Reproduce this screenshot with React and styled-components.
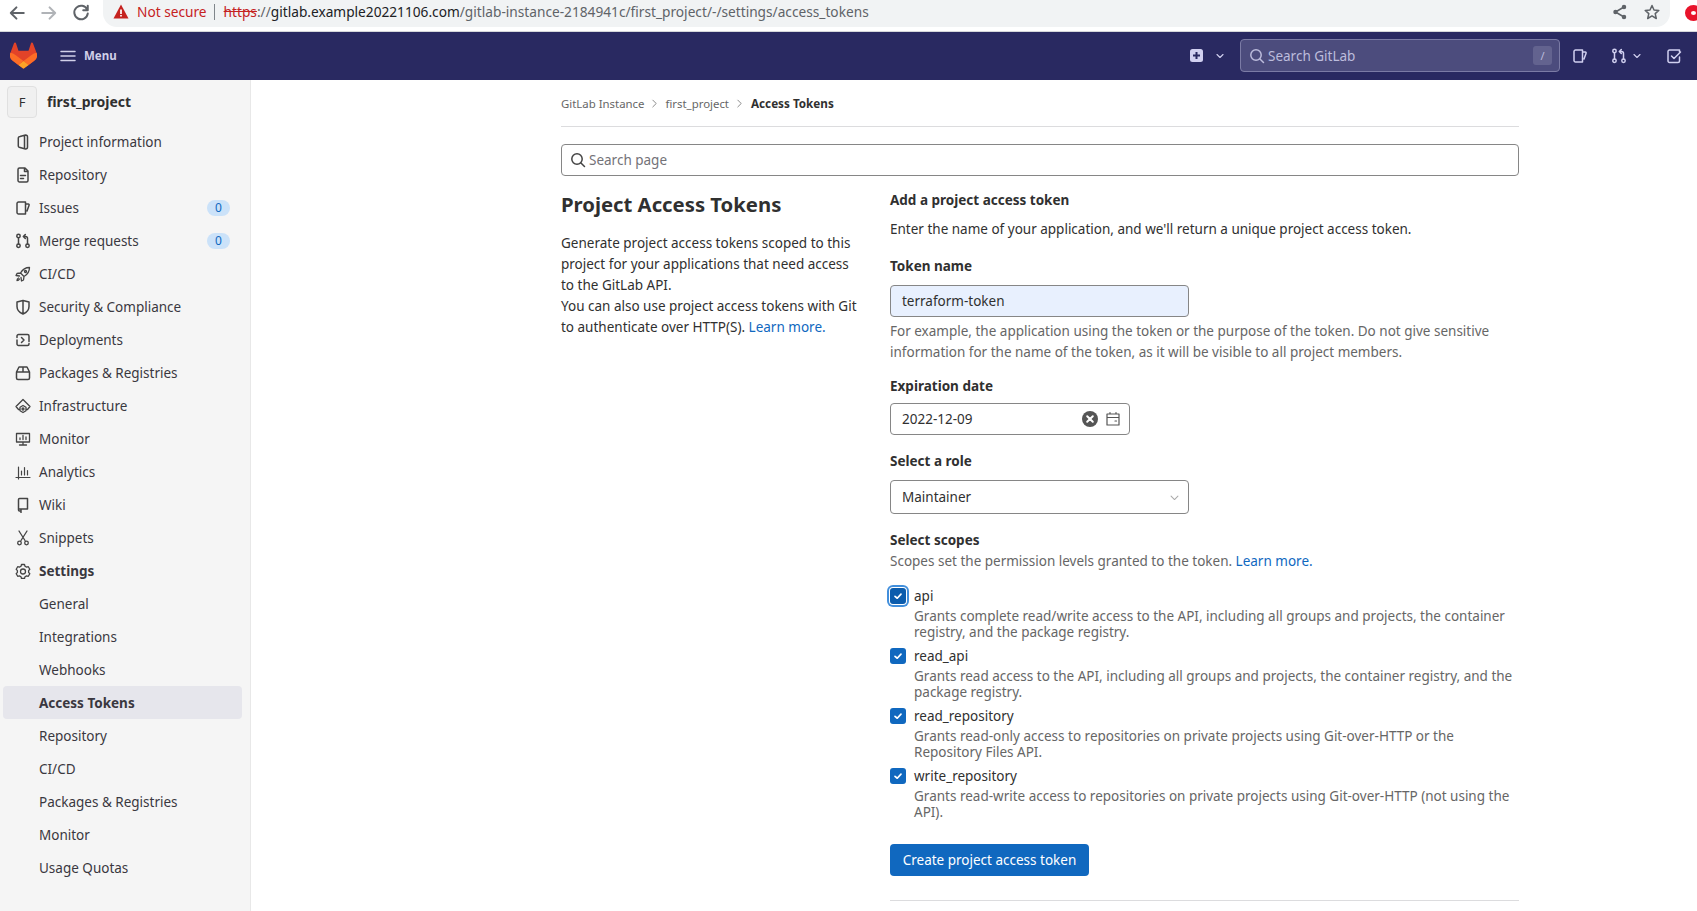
import React from "react";
import styled, { createGlobalStyle } from "styled-components";

const GlobalStyle = createGlobalStyle`
  html, body { margin: 0; padding: 0; height: 911px; overflow: hidden; background: #fff; }
  body { font-family: "Noto Sans", "Open Sans", sans-serif; font-size: 13.5px; color: #303030; }
  * { box-sizing: border-box; }
`;

const Page = styled.div`
  width: 1697px;
  height: 911px;
  display: flex;
  flex-direction: column;
  overflow: hidden;
`;

/* browser chrome */
const BrowserBar = styled.div`
  height: 32px;
  flex: none;
  display: flex;
  align-items: flex-start;
  background: #fff;
  border-bottom: 1px solid #d5d7da;
  overflow: hidden;
`;
const NavButtons = styled.div`
  width: 103px;
  flex: none;
  display: flex;
  gap: 14px;
  padding: 4px 0 0 8px;
`;
const Omnibox = styled.div`
  width: 1567px;
  height: 27px;
  flex: none;
  background: #f1f3f4;
  border-radius: 0 0 14px 14px;
  display: flex;
  align-items: center;
  padding: 0 10px 4px 10px;
  font-size: 13.7px;
  white-space: nowrap;
`;
const NotSecure = styled.span`
  color: #c5221f;
  margin-left: 8px;
  margin-right: 7px;
`;
const Sep = styled.span`
  width: 1px;
  height: 16px;
  background: #80868b;
  margin-right: 9px;
`;
const Https = styled.span`
  color: #c5221f;
  text-decoration: line-through;
`;
const Host = styled.span`
  color: #202124;
`;
const UrlRest = styled.span`
  color: #5f6368;
`;
const OmniIcons = styled.div`
  margin-left: auto;
  display: flex;
  gap: 16px;
  color: #5f6368;
`;
const RedBadge = styled.div`
  width: 17px;
  height: 16px;
  border-radius: 50%;
  border: 6px solid #e8132b;
  margin: 5px 0 0 15px;
  flex: none;
`;

/* gitlab navbar */
const NavBar = styled.header`
  height: 48px;
  flex: none;
  background: #292961;
  display: flex;
  align-items: center;
  padding-bottom: 1px;
  color: #d1d0f0;
`;
const LogoLink = styled.div`
  width: 60px;
  padding-left: 10px;
  display: flex;
`;
const MenuBtn = styled.div`
  display: flex;
  align-items: center;
  gap: 8px;
  font-size: 11.5px;
  font-weight: 700;
  color: #d1d0e9;
`;
const NavRight = styled.div`
  margin-left: auto;
  display: flex;
  align-items: center;
`;
const NavIcon = styled.div`
  display: flex;
  align-items: center;
  gap: ${(p) => p.$gap || 4}px;
  margin-left: ${(p) => p.$ml || 0}px;
  margin-right: ${(p) => p.$mr || 0}px;
`;
const NavSearch = styled.div`
  width: 320px;
  height: 33px;
  background: #4c4c7d;
  border: 1px solid #7b7ba5;
  border-radius: 4px;
  display: flex;
  align-items: center;
  padding: 0 7px 0 8px;
  gap: 3px;
  color: #bcbcdc;
`;
const SlashKey = styled.span`
  margin-left: auto;
  width: 19px;
  height: 19px;
  background: #63638f;
  border-radius: 3px;
  font-size: 11px;
  display: flex;
  align-items: center;
  justify-content: center;
`;

const Body = styled.div`
  flex: 1;
  display: flex;
  min-height: 0;
`;

/* sidebar */
const Sidebar = styled.aside`
  width: 251px;
  flex: none;
  background: #f5f5f5;
  border-right: 1px solid #e8e8e8;
  padding: 6px 0 0 3px;
  overflow: hidden;
`;
const ProjectHead = styled.div`
  display: flex;
  align-items: center;
  gap: 10px;
  padding: 0 0 1px 4px;
  height: 32px;
  margin-bottom: 7px;
  font-size: 14px;
  font-weight: 700;
  color: #303030;
`;
const Avatar = styled.div`
  width: 30px;
  height: 32px;
  flex: none;
  border: 1px solid #e0e0e0;
  border-radius: 4px;
  background: #f0f0f0;
  display: flex;
  align-items: center;
  justify-content: center;
  font-weight: 400;
  font-size: 13px;
`;
const NavItem = styled.div`
  height: 33px;
  width: 239px;
  display: flex;
  align-items: center;
  padding-left: ${(p) => (p.$sub ? 36 : 12)}px;
  gap: 8px;
  color: #3a383f;
  border-radius: 4px;
  font-weight: ${(p) => (p.$strong ? 700 : 400)};
  background: ${(p) => (p.$active ? "#e6e6ec" : "transparent")};
  svg { flex: none; color: #444; }
`;
const Count = styled.span`
  margin-left: auto;
  margin-right: 12px;
  width: 23px;
  height: 16px;
  border-radius: 8px;
  background: #cbe2f9;
  color: #1068bf;
  font-size: 12px;
  line-height: 16px;
  text-align: center;
`;

/* main column */
const Main = styled.main`
  flex: 1;
  padding-left: 310px;
`;
const Content = styled.div`
  width: 958px;
`;
const Crumbs = styled.nav`
  height: 47px;
  border-bottom: 1px solid #dcdcde;
  display: flex;
  align-items: center;
  gap: 6px;
  font-size: 11.4px;
  color: #666;
`;
const CrumbCurrent = styled.span`
  font-size: 11.7px;
  font-weight: 700;
  color: #303030;
  margin-left: 1px;
`;
const PageSearch = styled.div`
  margin-top: 17px;
  height: 32px;
  border: 1px solid #868686;
  border-radius: 4px;
  display: flex;
  align-items: center;
  padding-left: 8px;
  gap: 3px;
  color: #737278;
  svg { color: #444; }
`;
const Columns = styled.div`
  display: flex;
  margin-top: 14px;
`;
const Intro = styled.section`
  width: 329px;
  flex: none;
`;
const Title = styled.h2`
  margin: 0 0 15px;
  font-size: 20.3px;
  line-height: 28px;
  font-weight: 700;
  color: #303030;
`;
const IntroText = styled.p`
  margin: 0;
  width: 300px;
  line-height: 21px;
  color: #303030;
`;
const Link = styled.a`
  color: #1068bf;
`;
const FormCol = styled.section`
  flex: 1;
`;
const SubHead = styled.div`
  font-weight: 700;
  line-height: 21px;
`;
const FieldLabel = styled.label`
  display: block;
  font-weight: 700;
  line-height: 21px;
  margin-top: ${(p) => p.$mt || 16}px;
`;
const Line = styled.div`
  line-height: 21px;
  margin-top: ${(p) => p.$mt || 0}px;
  color: ${(p) => (p.$muted ? "#666" : "#303030")};
`;
const Field = styled.div`
  width: ${(p) => p.$w}px;
  height: ${(p) => p.$h || 32}px;
  border: 1px solid #868686;
  border-radius: 4px;
  background: ${(p) => p.$fill || "#fff"};
  display: flex;
  align-items: center;
  padding: 0 8px 0 11px;
  margin-top: ${(p) => p.$mt || 0}px;
  color: #303030;
`;
const FieldIcons = styled.div`
  margin-left: auto;
  display: flex;
  align-items: center;
  gap: 7px;
  color: #555;
`;
const ScopeList = styled.div`
  margin-top: 13px;
`;
const Scope = styled.div`
  display: grid;
  grid-template-columns: 16px 1fr;
  column-gap: 8px;
  margin-bottom: 5px;
`;
const Check = styled.div`
  width: 16px;
  height: 16px;
  margin-top: 3px;
  border-radius: 3px;
  background: ${(p) => (p.$focus ? "#0b5cad" : "#1068bf")};
  box-shadow: ${(p) => (p.$focus ? "0 0 0 1px #fff, 0 0 0 3px #428fdc" : "none")};
  color: #fff;
  display: flex;
  align-items: center;
  justify-content: center;
`;
const ScopeName = styled.div`
  line-height: 23px;
`;
const ScopeDesc = styled.div`
  grid-column: 2;
  line-height: 16px;
  color: #666;
`;
const Primary = styled.button`
  display: block;
  margin-top: 24px;
  width: 199px;
  height: 32px;
  border: 0;
  border-radius: 4px;
  background: #1068bf;
  color: #fff;
  font: inherit;
`;
const Rule = styled.hr`
  border: 0;
  border-top: 1px solid #dcdcde;
  margin: 24px 0 0;
`;

const Svg = ({ s = 16, children, w = 1.5, ...rest }) => (
  <svg width={s} height={s} viewBox="0 0 16 16" fill="none" stroke="currentColor" strokeWidth={w} strokeLinecap="round" strokeLinejoin="round" {...rest}>
    {children}
  </svg>
);

const ic = {
  info: <Svg><path d="M5 2.500 10.500 1c1.200 0 2 .8 2 2v10c0 1.200-.8 2-2 2L5 13.500c-1 0-1.700-.7-1.700-1.700V4.200C3.300 3.200 4 2.500 5 2.500zM9.500 1.500v13" /></Svg>,
  repo: <Svg><path d="M3 2.500C3 1.700 3.700 1 4.500 1H10l3 3v9.500c0 .8-.7 1.500-1.500 1.500h-7C3.700 15 3 14.300 3 13.500zM9.500 1.500V4.500H12.500M5.500 8.500H10.500M5.500 11.500H8.500" /></Svg>,
  issues: <Svg><path d="M2 3.500C2 2.700 2.700 2 3.500 2H10.500V14H3.500C2.700 14 2 13.300 2 12.500zM10.500 4H13.200C14 4 14.300 4.700 14 5.500L12 11" /></Svg>,
  merge: <Svg><circle cx="3.500" cy="12.800" r="1.700" /><circle cx="3.500" cy="3" r="1.700" /><circle cx="12.500" cy="12.800" r="1.700" /><path d="M3.500 5V11M12.500 11V5.500C12.500 4.300 11.700 3.500 10.500 3.500H8.500M10.300 1.500 8.300 3.500 10.300 5.500" /></Svg>,
  rocket: <Svg w={1.300}><path d="M14.500 1.500c-4 0-7 2-9 5.500l3.500 3.500c3.500-2 5.500-5 5.500-9zM5.500 7 2 7.500 1 9.500 4.500 10M9 10.500 8.500 14 6.500 15 6 11.500M3.500 12c-1 .5-1.500 1.500-1.500 2.500 1 0 2-.5 2.500-1.500" /><circle cx="10.500" cy="5.500" r="1" /></Svg>,
  shield: <Svg><path d="M8 1.500 14 3V7.500C14 11 11.500 13.500 8 15 4.500 13.500 2 11 2 7.500V3zM8 2V14.500" /></Svg>,
  deploy: <Svg><path d="M2 5.500V4C2 3.200 2.700 2.500 3.500 2.500H12.500C13.500 2.500 14 3 14 4V9.500M14 11.500V12C14 12.800 13.300 13.500 12.500 13.500H3.500C2.700 13.500 2 12.800 2 12V8M6.500 5.500 9 8 6.500 10.500" /></Svg>,
  pkg: <Svg><path d="M1.500 7H14.500V13C14.500 13.800 13.800 14.500 13 14.500H3C2.200 14.500 1.500 13.800 1.500 13zM1.500 7 4 2H12L14.500 7M8 2V7" /></Svg>,
  infra: <Svg w={1.300}><path d="M4.500 11.500H3.500L1 8.500 8 1.500 15 8.500 12.500 11.500H11.500" /><path d="M8 7.500 11 9.200V12.800L8 14.500 5 12.800V9.200z" /><circle cx="8" cy="11" r="1" /></Svg>,
  monitor: <Svg w={1.300}><path d="M1.500 2.500H14.500V11H1.500zM8 11V14M4.500 14H11.500M5 8.500V7M8 8.500V4.500M11 8.500V6" /></Svg>,
  analytics: <Svg w={1.200}><path d="M1 13.500H15M3.500 15V3M6.500 11V7M9.500 11V3.500M12.500 11V6.500" /></Svg>,
  wiki: <Svg><path d="M3.500 2.500C3.500 1.900 4 1.500 4.500 1.500H12.500V12H3.500zM3.500 12V13C3.500 13.500 4 14 4.500 14H6M6 12V15.500" /></Svg>,
  snippet: <Svg w={1.300}><path d="M4 1 10 10.500M12 1 6 10.500" /><circle cx="4.500" cy="13" r="1.800" /><circle cx="11.500" cy="13" r="1.800" /></Svg>,
  settings: <Svg w={1.300}><path d="M6.500 1.500h3l.5 1.700 1.600.9 1.700-.4 1.500 2.600-1.200 1.300v1.800l1.200 1.300-1.500 2.600-1.700-.4-1.600.9-.5 1.700h-3l-.5-1.700-1.600-.9-1.700.4L1.200 10.700l1.200-1.300V7.600L1.200 6.300l1.500-2.600 1.700.4 1.600-.9z" /><circle cx="8" cy="8.500" r="2.500" /></Svg>,
  search: <Svg><circle cx="7" cy="7" r="5.200" /><path d="M11 11 14.500 14.500" /></Svg>,
  chevron: <Svg s={12}><path d="M4 6 8 10 12 6" /></Svg>,
  check: <Svg s={12} w={2.200}><path d="M4 8.500 7 11 12 5.500" /></Svg>,
};

const Logo = () => (
  <svg width="27" height="27" viewBox="0 0 32 32">
    <path fill="#e24329" d="M31.460 12.780l-.04-.12-4.350-11.350A1.140 1.140 0 0 0 25.940.6c-.24 0-.47.1-.66.24-.19.15-.33.36-.39.6l-2.940 9h-11.900l-2.940-9A1.140 1.140 0 0 0 6 .58a1.150 1.150 0 0 0-1.140.72L.53 12.670l-.04.12a8.080 8.080 0 0 0 2.680 9.340l.01.01.04.03 6.630 4.970 3.280 2.480 2 1.510a1.350 1.350 0 0 0 1.620 0l2-1.510 3.280-2.480 6.670-5h.02a8.090 8.090 0 0 0 2.740-9.360z" />
    <path fill="#fc6d26" d="M31.460 12.780l-.04-.12a14.750 14.750 0 0 0-5.860 2.640l-9.550 7.240 6.090 4.600 6.670-5h.02a8.090 8.090 0 0 0 2.670-9.360z" />
    <path fill="#fca326" d="M9.900 27.140l3.280 2.480 2 1.500a1.350 1.350 0 0 0 1.620 0l2-1.500 3.280-2.480-6.100-4.600-6.070 4.600z" />
    <path fill="#fc6d26" d="M6.440 15.300a14.710 14.710 0 0 0-5.860-2.630l-.05.12a8.080 8.080 0 0 0 2.680 9.340l.01.01.04.03 6.630 4.970 6.100-4.600-9.550-7.240z" />
  </svg>
);

const navItems = [
  ["Project information", "info"],
  ["Repository", "repo"],
  ["Issues", "issues", "0"],
  ["Merge requests", "merge", "0"],
  ["CI/CD", "rocket"],
  ["Security & Compliance", "shield"],
  ["Deployments", "deploy"],
  ["Packages & Registries", "pkg"],
  ["Infrastructure", "infra"],
  ["Monitor", "monitor"],
  ["Analytics", "analytics"],
  ["Wiki", "wiki"],
  ["Snippets", "snippet"],
];
const subItems = ["General", "Integrations", "Webhooks", "Access Tokens", "Repository", "CI/CD", "Packages & Registries", "Monitor", "Usage Quotas"];

const scopes = [
  ["api", "Grants complete read/write access to the API, including all groups and projects, the container registry, and the package registry."],
  ["read_api", "Grants read access to the API, including all groups and projects, the container registry, and the package registry."],
  ["read_repository", "Grants read-only access to repositories on private projects using Git-over-HTTP or the Repository Files API."],
  ["write_repository", "Grants read-write access to repositories on private projects using Git-over-HTTP (not using the API)."],
];

export default function App() {
  return (
    <Page>
      <GlobalStyle />
      <BrowserBar>
        <NavButtons>
          <Svg s={18} w={1.800} color="#5f6368"><path d="M14 8H2.500M7.500 3 2.500 8 7.500 13" /></Svg>
          <Svg s={18} w={1.800} color="#b0b3b7"><path d="M2 8H13.500M8.500 3 13.500 8 8.500 13" /></Svg>
          <Svg s={18} w={1.800} color="#5f6368"><path d="M13.500 5A6 6 0 1 0 14 8.500M14 1.500V5.500H10" /></Svg>
        </NavButtons>
        <Omnibox>
          <svg width="16" height="15" viewBox="0 0 16 15"><path fill="#c5221f" d="M8 .5 15.500 14.500H.5z" /><path stroke="#fff" strokeWidth="1.700" d="M8 5.500V10M8 11V12.500" /></svg>
          <NotSecure>Not secure</NotSecure>
          <Sep />
          <Https>https</Https>
          <UrlRest>://</UrlRest>
          <Host>gitlab.example20221106.com</Host>
          <UrlRest>/gitlab-instance-2184941c/first_project/-/settings/access_tokens</UrlRest>
          <OmniIcons>
            <Svg><circle cx="12" cy="3" r="1.500" fill="currentColor" /><circle cx="12" cy="13" r="1.500" fill="currentColor" /><circle cx="3.500" cy="8" r="1.500" fill="currentColor" /><path d="M12 3 3.500 8 12 13" /></Svg>
            <Svg><path d="M8 1.500 10 6 14.800 6.400 11.200 9.600 12.300 14.500 8 11.900 3.700 14.500 4.800 9.600 1.200 6.400 6 6z" /></Svg>
          </OmniIcons>
        </Omnibox>
        <RedBadge />
      </BrowserBar>

      <NavBar>
        <LogoLink><Logo /></LogoLink>
        <MenuBtn>
          <Svg><path d="M1 3.500H15M1 8H15M1 12.500H15" /></Svg>
          Menu
        </MenuBtn>
        <NavRight>
          <NavIcon $gap={11} $mr={14}>
            <svg width="13" height="13" viewBox="0 0 13 13"><rect width="13" height="13" rx="2.500" fill="currentColor" /><path stroke="#292961" strokeWidth="2" d="M6.500 3V10M3 6.500H10" /></svg>
            {ic.chevron}
          </NavIcon>
          <NavSearch>
            {ic.search}
            Search GitLab
            <SlashKey>/</SlashKey>
          </NavSearch>
          <NavIcon $ml={12}>{ic.issues}</NavIcon>
          <NavIcon $ml={23}>{ic.merge}{ic.chevron}</NavIcon>
          <NavIcon $ml={23} $mr={15}>
            <Svg><path d="M13.500 9V13C13.500 13.800 12.800 14.500 12 14.500H3.500C2.700 14.500 2 13.800 2 13V3.500C2 2.700 2.700 2 3.500 2H13.500V4M5.500 8 8 10.500 14.500 4" /></Svg>
          </NavIcon>
        </NavRight>
      </NavBar>

      <Body>
        <Sidebar>
          <ProjectHead>
            <Avatar>F</Avatar>
            first_project
          </ProjectHead>
          {navItems.map(([label, icon, count]) => (
            <NavItem key={label}>
              {ic[icon]}
              {label}
              {count && <Count>{count}</Count>}
            </NavItem>
          ))}
          <NavItem $strong>{ic.settings}Settings</NavItem>
          {subItems.map((label, i) => (
            <NavItem key={i} $sub $active={label === "Access Tokens"} $strong={label === "Access Tokens"}>
              {label}
            </NavItem>
          ))}
        </Sidebar>

        <Main>
          <Content>
            <Crumbs>
              GitLab Instance
              <Svg s={9} color="#777"><path d="M5 2 11 8 5 14" /></Svg>
              first_project
              <Svg s={9} color="#777"><path d="M5 2 11 8 5 14" /></Svg>
              <CrumbCurrent>Access Tokens</CrumbCurrent>
            </Crumbs>
            <PageSearch>
              {ic.search}
              Search page
            </PageSearch>
            <Columns>
              <Intro>
                <Title>Project Access Tokens</Title>
                <IntroText>
                  Generate project access tokens scoped to this project for your applications that need access to the GitLab API.
                  <br />
                  You can also use project access tokens with Git to authenticate over HTTP(S). <Link>Learn more.</Link>
                </IntroText>
              </Intro>
              <FormCol>
                <SubHead>Add a project access token</SubHead>
                <Line $mt={8}>Enter the name of your application, and we'll return a unique project access token.</Line>
                <FieldLabel>Token name</FieldLabel>
                <Field $w={299} $mt={8} $fill="#e8f0fe">terraform-token</Field>
                <Line $mt={4} $muted>
                  For example, the application using the token or the purpose of the token. Do not give sensitive information for the name of the token, as it will be visible to all project members.
                </Line>
                <FieldLabel $mt={13}>Expiration date</FieldLabel>
                <Field $w={240} $mt={6}>
                  2022-12-09
                  <FieldIcons>
                    <svg width="16" height="16" viewBox="0 0 16 16"><circle cx="8" cy="8" r="8" fill="#555" /><path stroke="#fff" strokeWidth="2" strokeLinecap="round" d="M5.200 5.200 10.800 10.800M10.800 5.200 5.200 10.800" /></svg>
                    <Svg w={1.200}><path d="M2 3H14V14H2zM2 6.500H14M5 1.500V3M11 1.500V3M10 10H11.500" /></Svg>
                  </FieldIcons>
                </Field>
                <FieldLabel>Select a role</FieldLabel>
                <Field $w={299} $h={34} $mt={8}>
                  Maintainer
                  <FieldIcons><Svg s={11} color="#aaa"><path d="M3 6 8 11 13 6" /></Svg></FieldIcons>
                </Field>
                <FieldLabel>Select scopes</FieldLabel>
                <Line $muted>Scopes set the permission levels granted to the token. <Link>Learn more.</Link></Line>
                <ScopeList>
                  {scopes.map(([name, desc], i) => (
                    <Scope key={name}>
                      <Check $focus={i === 0}>{ic.check}</Check>
                      <ScopeName>{name}</ScopeName>
                      <ScopeDesc>{desc}</ScopeDesc>
                    </Scope>
                  ))}
                </ScopeList>
                <Primary>Create project access token</Primary>
                <Rule />
              </FormCol>
            </Columns>
          </Content>
        </Main>
      </Body>
    </Page>
  );
}
